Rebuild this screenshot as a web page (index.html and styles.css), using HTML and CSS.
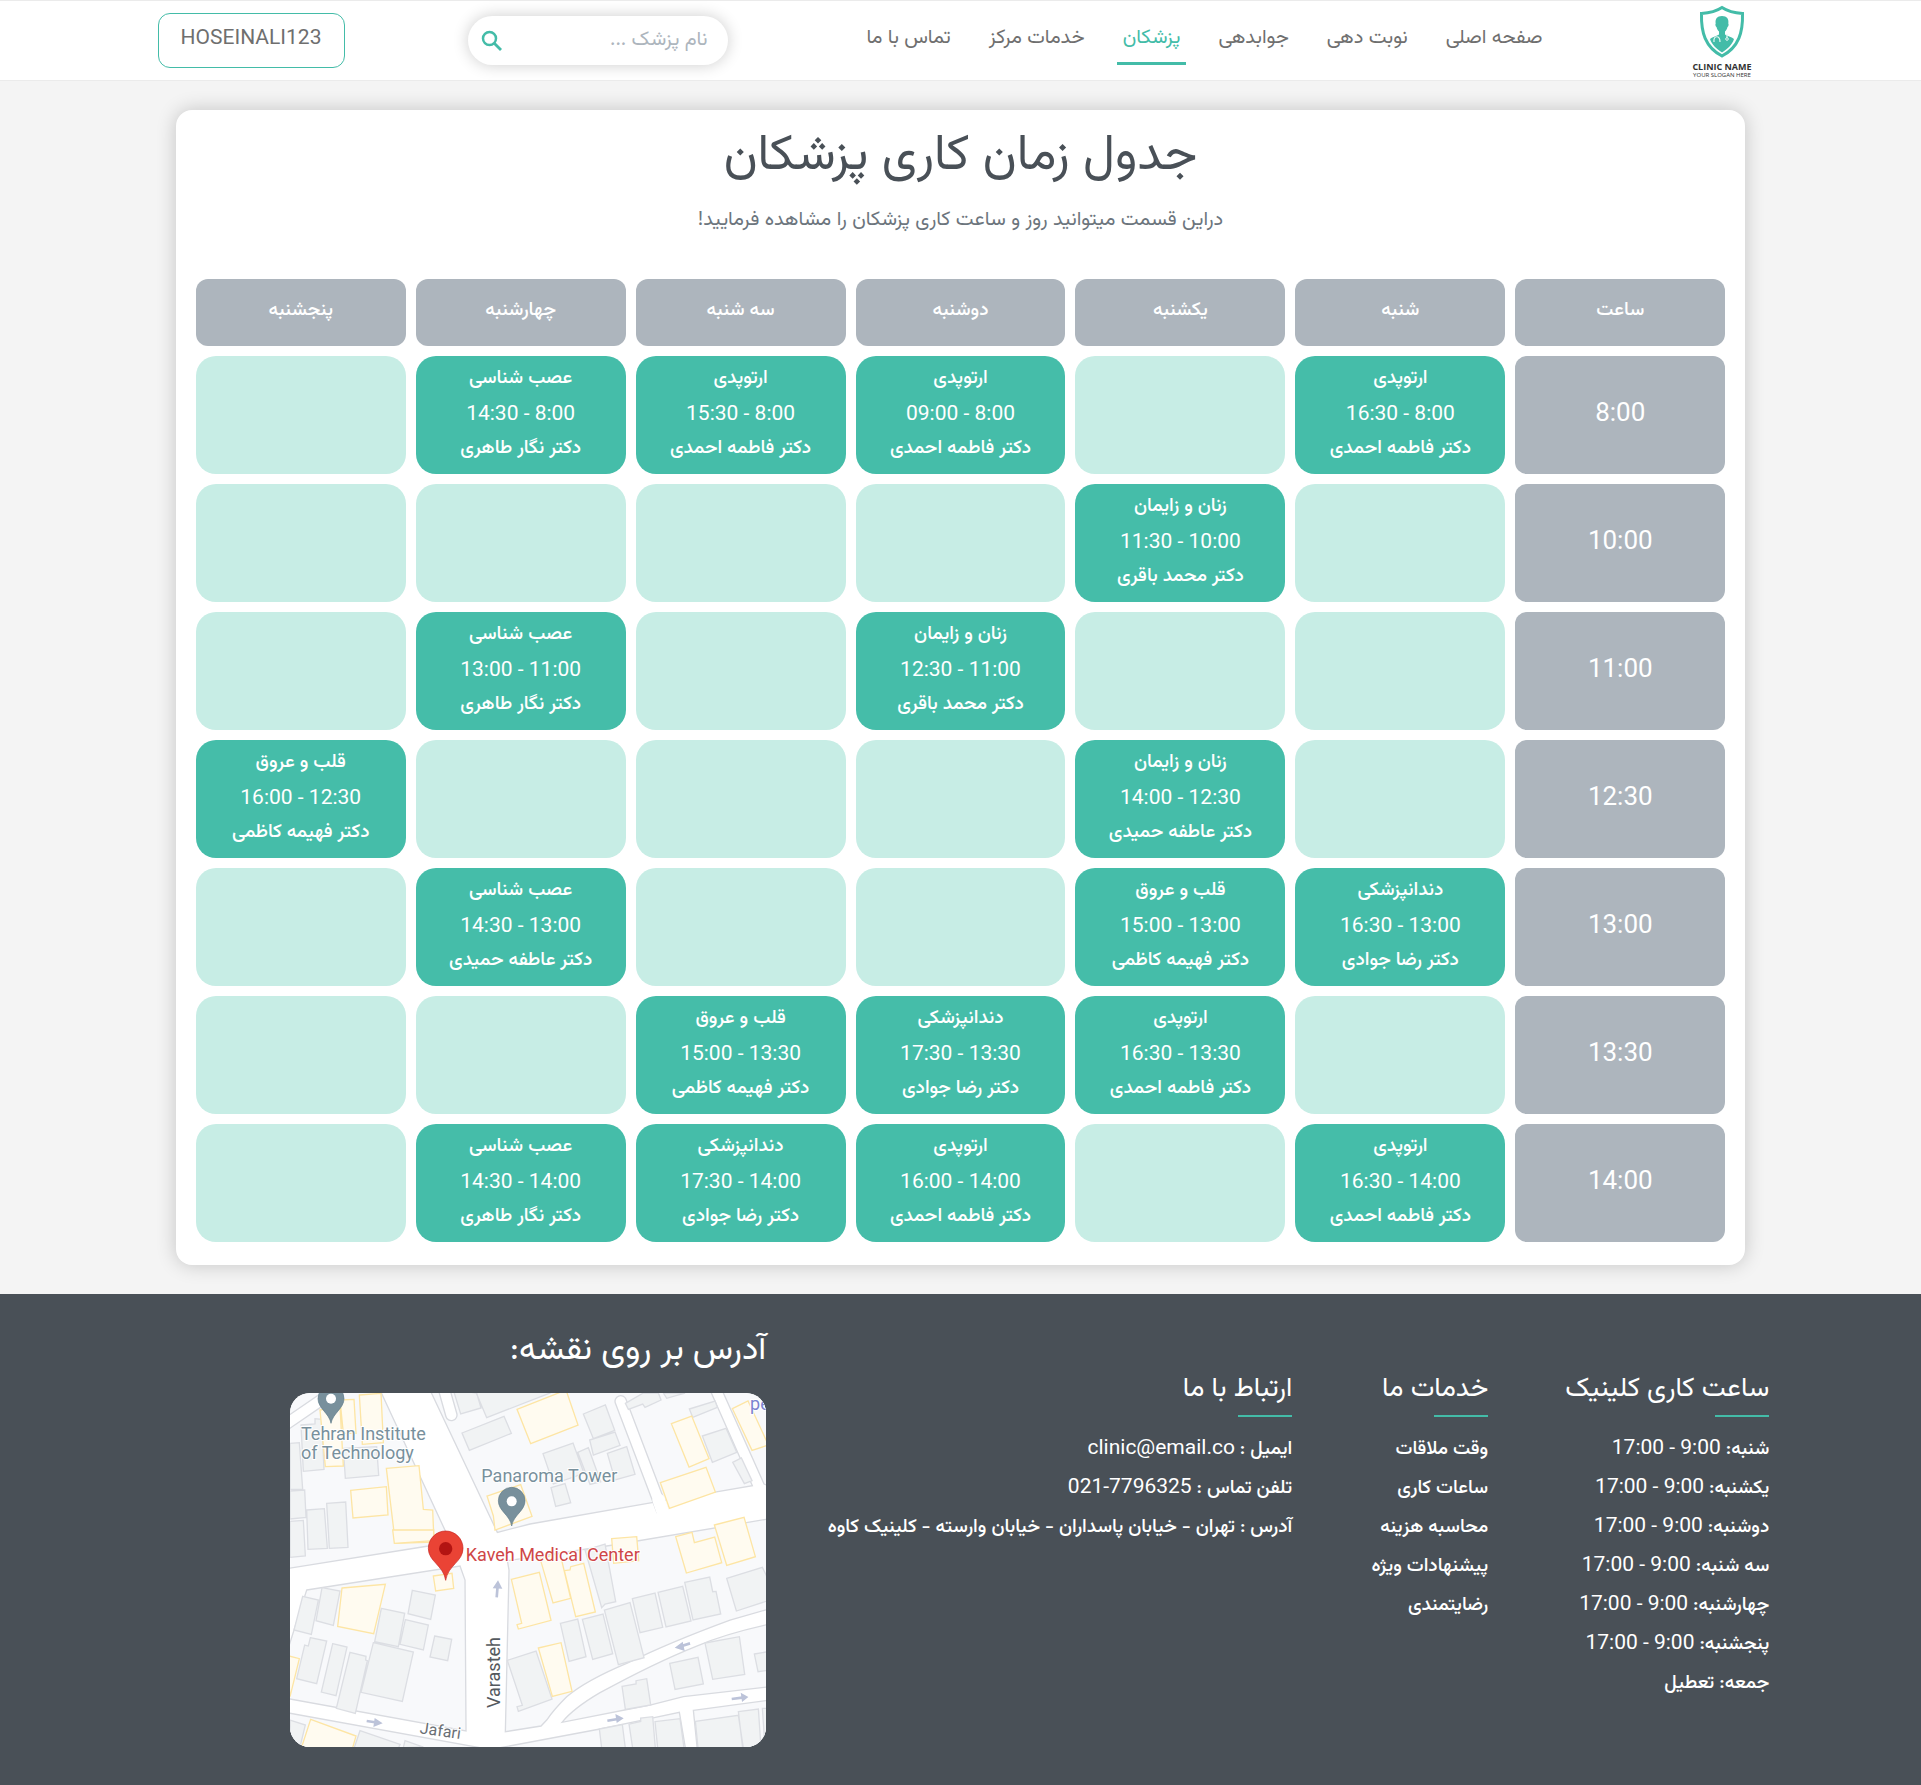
FILE: index.html
```html
<!DOCTYPE html>
<html lang="fa" dir="rtl">
<head>
<meta charset="utf-8">
<meta name="viewport" content="width=device-width, initial-scale=1">
<title>جدول زمان کاری پزشکان</title>
<link rel="stylesheet" href="styles.css">
</head>
<body>
<header class="header">
  <a class="logo" href="#" aria-label="Clinic Name">
    <svg viewBox="0 0 66 78" width="66" height="78">
      <path d="M33 6.500C27 10.500 20 12 12.500 12.500C12 31 16 46 33 55C50 46 54 31 53.500 12.500C46 12 39 10.500 33 6.500Z" fill="#fff" stroke="#43bca8" stroke-width="3"/>
      <path d="M33 15c-5 0-7 3-6.300 7.500c-.8 1 0 3 .8 3.500c.5 2 1.500 3.500 2.500 4.500v3c-3 2-7 2.500-9 4.500c2 6 6 9.500 12 13.500c6-4 10-7.500 12-13.500c-2-2-6-2.500-9-4.500v-3c1-1 2-2.500 2.500-4.500c.8-.5 1.600-2.500 .8-3.500C40 18 38 15 33 15Z" fill="#43bca8"/>
      <path d="M25 41c-1-7 6-7 6 0M38 33v4" fill="none" stroke="#e6f7f3" stroke-width="1.200"/>
      <circle cx="38" cy="38" r="1.300" fill="none" stroke="#e6f7f3"/>
      <text class="logo-name" x="33" y="69">CLINIC NAME</text>
      <text class="logo-slogan" x="33" y="76">YOUR SLOGAN HERE</text>
    </svg>
  </a>
  <nav class="nav">
    <a class="nav-link" href="#">صفحه اصلی</a>
    <a class="nav-link" href="#">نوبت دهی</a>
    <a class="nav-link" href="#">جوابدهی</a>
    <a class="nav-link nav-link-active" href="#" aria-current="page">پزشکان</a>
    <a class="nav-link" href="#">خدمات مرکز</a>
    <a class="nav-link" href="#">تماس با ما</a>
  </nav>
  <form class="search" role="search">
    <input class="search-input" type="text" placeholder="نام پزشک ..." aria-label="نام پزشک">
    <button class="search-button" type="button" aria-label="جستجو">
      <svg viewBox="0 0 24 24" width="24" height="24"><circle cx="9.500" cy="9.500" r="6.500" fill="none" stroke="#43bca8" stroke-width="2.500"/><path d="M14 14l7 7" stroke="#43bca8" stroke-width="2.800"/></svg>
    </button>
  </form>
  <button class="account" type="button">HOSEINALI123</button>
</header>

<main class="card">
  <h1 class="title">جدول زمان کاری پزشکان</h1>
  <p class="subtitle">دراین قسمت میتوانید روز و ساعت کاری پزشکان را مشاهده فرمایید!</p>
  <table class="schedule">
    <thead>
      <tr><th scope="col">ساعت</th><th scope="col">شنبه</th><th scope="col">یکشنبه</th><th scope="col">دوشنبه</th><th scope="col">سه شنبه</th><th scope="col">چهارشنبه</th><th scope="col">پنجشنبه</th></tr>
    </thead>
    <tbody>
      <tr>
        <th scope="row">8:00</th>
        <td class="busy"><p>ارتوپدی</p><p class="time">8:00 - 16:30</p><p>دکتر فاطمه احمدی</p></td>
        <td></td>
        <td class="busy"><p>ارتوپدی</p><p class="time">8:00 - 09:00</p><p>دکتر فاطمه احمدی</p></td>
        <td class="busy"><p>ارتوپدی</p><p class="time">8:00 - 15:30</p><p>دکتر فاطمه احمدی</p></td>
        <td class="busy"><p>عصب شناسی</p><p class="time">8:00 - 14:30</p><p>دکتر نگار طاهری</p></td>
        <td></td>
      </tr>
      <tr>
        <th scope="row">10:00</th>
        <td></td>
        <td class="busy"><p>زنان و زایمان</p><p class="time">10:00 - 11:30</p><p>دکتر محمد باقری</p></td>
        <td></td><td></td><td></td><td></td>
      </tr>
      <tr>
        <th scope="row">11:00</th>
        <td></td><td></td>
        <td class="busy"><p>زنان و زایمان</p><p class="time">11:00 - 12:30</p><p>دکتر محمد باقری</p></td>
        <td></td>
        <td class="busy"><p>عصب شناسی</p><p class="time">11:00 - 13:00</p><p>دکتر نگار طاهری</p></td>
        <td></td>
      </tr>
      <tr>
        <th scope="row">12:30</th>
        <td></td>
        <td class="busy"><p>زنان و زایمان</p><p class="time">12:30 - 14:00</p><p>دکتر عاطفه حمیدی</p></td>
        <td></td><td></td><td></td>
        <td class="busy"><p>قلب و عروق</p><p class="time">12:30 - 16:00</p><p>دکتر فهیمه کاظمی</p></td>
      </tr>
      <tr>
        <th scope="row">13:00</th>
        <td class="busy"><p>دندانپزشکی</p><p class="time">13:00 - 16:30</p><p>دکتر رضا جوادی</p></td>
        <td class="busy"><p>قلب و عروق</p><p class="time">13:00 - 15:00</p><p>دکتر فهیمه کاظمی</p></td>
        <td></td><td></td>
        <td class="busy"><p>عصب شناسی</p><p class="time">13:00 - 14:30</p><p>دکتر عاطفه حمیدی</p></td>
        <td></td>
      </tr>
      <tr>
        <th scope="row">13:30</th>
        <td></td>
        <td class="busy"><p>ارتوپدی</p><p class="time">13:30 - 16:30</p><p>دکتر فاطمه احمدی</p></td>
        <td class="busy"><p>دندانپزشکی</p><p class="time">13:30 - 17:30</p><p>دکتر رضا جوادی</p></td>
        <td class="busy"><p>قلب و عروق</p><p class="time">13:30 - 15:00</p><p>دکتر فهیمه کاظمی</p></td>
        <td></td><td></td>
      </tr>
      <tr>
        <th scope="row">14:00</th>
        <td class="busy"><p>ارتوپدی</p><p class="time">14:00 - 16:30</p><p>دکتر فاطمه احمدی</p></td>
        <td></td>
        <td class="busy"><p>ارتوپدی</p><p class="time">14:00 - 16:00</p><p>دکتر فاطمه احمدی</p></td>
        <td class="busy"><p>دندانپزشکی</p><p class="time">14:00 - 17:30</p><p>دکتر رضا جوادی</p></td>
        <td class="busy"><p>عصب شناسی</p><p class="time">14:00 - 14:30</p><p>دکتر نگار طاهری</p></td>
        <td></td>
      </tr>
    </tbody>
  </table>
</main>

<footer class="footer">
  <section class="footer-column">
    <h2 class="footer-title">ساعت کاری کلینیک</h2>
    <ul class="footer-list">
      <li>شنبه: <span class="latin">9:00 - 17:00</span></li>
      <li>یکشنبه: <span class="latin">9:00 - 17:00</span></li>
      <li>دوشنبه: <span class="latin">9:00 - 17:00</span></li>
      <li>سه شنبه: <span class="latin">9:00 - 17:00</span></li>
      <li>چهارشنبه: <span class="latin">9:00 - 17:00</span></li>
      <li>پنجشنبه: <span class="latin">9:00 - 17:00</span></li>
      <li>جمعه: تعطیل</li>
    </ul>
  </section>
  <section class="footer-column">
    <h2 class="footer-title">خدمات ما</h2>
    <ul class="footer-list">
      <li><a href="#">وقت ملاقات</a></li>
      <li><a href="#">ساعات کاری</a></li>
      <li><a href="#">محاسبه هزینه</a></li>
      <li><a href="#">پیشنهادات ویژه</a></li>
      <li><a href="#">رضایتمندی</a></li>
    </ul>
  </section>
  <section class="footer-column">
    <h2 class="footer-title">ارتباط با ما</h2>
    <ul class="footer-list">
      <li>ایمیل : <bdi class="latin">clinic@email.co</bdi></li>
      <li>تلفن تماس : <bdi class="latin" dir="ltr">021-7796325</bdi></li>
      <li>آدرس : تهران - خیابان پاسداران - خیابان وارسته - کلینیک کاوه</li>
    </ul>
  </section>
  <section class="location">
    <h2 class="location-title">آدرس بر روی نقشه:</h2>
    <svg class="map" viewBox="30 279 1428 1062" role="img" aria-label="Kaveh Medical Center" direction="ltr">
      <rect x="30" y="279" width="1428" height="1062" fill="#fff"/>
      <g fill="#f8f9fb" stroke="#d9dbe0" stroke-width="4">
        <path d="M20 270H300L497 695L445 738L20 806Z"/>
        <path d="M450 270H1290L1417 557L1300 577L1120 607L750 672L652 697Z"/>
        <path d="M1326 270H1470V560L1452 552Z"/>
      </g>
      <g fill="none" stroke-linecap="round">
        <path d="M10 378L160 275M490 260L514 345M1022 304L1146 630" stroke="#d9dbe0" stroke-width="38"/>
        <path d="M10 378L160 275M490 260L514 345M1022 304L1146 630" stroke="#fff" stroke-width="30"/>
        <path d="M1136 600L1150 640" stroke="#fff" stroke-width="38"/>
      </g>
      <g class="building">
        <path d="M520 270L542 342L603 324L590 279ZM585 270L620 353L810 279V270ZM546 399L672 349L694 400L568 451ZM910 342L976 315L1004 391L940 416ZM929 420L1005 396L1020 436L940 465ZM789 461L879 429L912 520L820 552ZM893 457L925 443L962 545L930 553ZM982 460L1040 440L1065 523L1005 540ZM813 563L855 551L872 608L827 619ZM1036 310L1090 279H1135L1143 300L1095 322L1088 312L1045 328ZM1150 279L1160 295L1215 279ZM1228 327L1305 303L1312 322L1238 352ZM1267 408L1338 385L1370 457L1297 487ZM1358 487L1384 474L1416 542L1393 551Z"/>
        <path d="M63 375L105 372V356L125 358L132 508L70 514ZM190 445L290 440L296 526L196 535ZM30 430L58 428L68 568H30ZM30 573L74 570L78 652L30 657ZM80 630L133 626L142 745L84 748ZM140 610L197 606L204 742L148 745ZM30 664L70 661L76 768L30 772Z"/>
      </g>
      <g class="home">
        <path d="M711 328L858 270L894 375L752 431ZM1174 371L1235 348L1287 476L1227 501ZM1357 326L1404 303L1465 435L1416 451ZM1141 548L1278 502L1306 576L1168 625ZM621 588L722 554L756 649L645 690L640 648Z"/>
        <path d="M120 330L180 320L190 498L136 500ZM180 300L222 298L228 400H190ZM238 285L303 280L310 428L247 433ZM319 505L417 497L430 628L458 630L462 726L346 730ZM212 571L319 560L324 645L219 654Z"/>
      </g>
      <g transform="translate(0 690)">
        <g fill="#f8f9fb" stroke="#d9dbe0" stroke-width="4">
          <path d="M80 180L540 108L555 150L558 603L20 505V370Z"/>
          <path d="M20 548L600 653H20Z"/>
          <path d="M682 92L1000 45L1470 -34V236L1350 270Q1170 336 1040 400Q920 450 860 500Q820 540 800 570L783 588L676 605L687 120Z"/>
          <path d="M846 577Q880 535 960 488Q1120 400 1250 348Q1340 310 1470 282V470L1210 500L1110 525Z"/>
          <path d="M660 653L960 597L1080 572L1198 547L1217 660ZM1240 541L1470 510V660H1252Z"/>
        </g>
        <g class="building">
          <path d="M68 199L115 210L94 313L42 300ZM126 173L180 183L160 286L108 272ZM397 181L466 195L452 268L384 251ZM304 235L374 250L355 350L284 335ZM376 269L445 285L430 360L360 343ZM464 318L515 328L503 392L450 381ZM280 338L400 366L367 514L243 487ZM91 323L140 333L110 461L50 446L74 345L85 348ZM158 341L201 351L168 497L124 486ZM210 367L258 379L257 390L262 392L226 550L169 535ZM30 570L76 585L60 651H30ZM240 602L360 643L355 655H222ZM375 632L430 651L370 653Z"/>
          <path d="M915 60L975 42L1007 215L975 222L965 233ZM841 280L893 267L918 380L867 394ZM907 268L969 252L998 371L938 388ZM973 240L1050 218L1092 383L1015 404ZM1057 206L1125 189L1148 292L1080 308ZM1134 187L1208 169L1233 273L1158 291ZM1214 157L1289 141L1298 185L1308 184L1322 252L1239 270ZM1340 145L1447 112L1470 160V210L1369 243ZM682 391L768 363L816 507L715 544L711 530L727 526ZM1026 469L1068 462V452L1100 446L1112 525L1036 538ZM1169 400L1254 382L1270 462L1185 478ZM1275 339L1378 320L1394 433L1298 448ZM1423 372L1470 364V420L1434 425ZM958 597L1027 584L1036 655H965ZM1047 582L1082 574V564L1118 560L1126 655H1058ZM1125 575L1200 566L1212 655H1133ZM1246 574L1375 556L1390 655H1254ZM1375 545L1435 537L1443 655H1388ZM1447 535H1470V655H1455Z"/>
        </g>
        <g class="home">
          <path d="M186 174L316 163L281 311L173 289ZM338 0L343 40L461 32V0ZM460 138L516 130L521 175L467 183ZM92 568L228 618L216 660H62ZM20 376L58 386L30 500Z"/>
          <path d="M694 148L778 127L813 271L715 297L711 284L725 280ZM780 85L840 70L872 205L819 219ZM853 122L870 120L872 110L911 100L946 246L887 260ZM995 26L1070 20L1076 92L1001 100ZM1187 20L1236 7L1243 38L1304 21L1325 98L1219 129ZM1303 -15L1392 -38L1426 80L1340 106ZM775 354L843 338L876 484L817 499Z"/>
        </g>
        <g fill="none" stroke="#bcc3d9" stroke-width="8">
          <path d="M650 202L653 165M260 573L295 578M982 572L1018 566M1355 507L1392 502M1230 340L1198 350"/>
        </g>
        <path fill="#bcc3d9" d="M638 175L654 151L667 176ZM284 564L308 580L280 591ZM1006 552L1031 565L1010 579ZM1382 488L1405 501L1386 516ZM1208 335L1184 353L1214 363Z"/>
      </g>
      <g fill="#78909c" stroke="#607d8b" stroke-width="2">
        <path d="M153 370C148 340 114 325 114 296A39 39 0 0 1 192 296C192 325 158 340 153 370Z"/>
        <path d="M695 678C690 645 655 633 655 602A40 40 0 0 1 735 602C735 633 700 645 695 678Z"/>
      </g>
      <g fill="#fff"><circle cx="153" cy="296" r="15"/><circle cx="695" cy="604" r="15"/></g>
      <path d="M497 841C490 795 445 785 445 745A52 52 0 0 1 549 745C549 785 504 795 497 841Z" fill="#ea4335" stroke="#c5221f" stroke-width="2"/>
      <circle cx="497" cy="746" r="20" fill="#b31412"/>
      <g class="map-text">
        <text class="place" x="63" y="420">Tehran Institute</text>
        <text class="place" x="63" y="478">of Technology</text>
        <text class="place" x="604" y="546">Panaroma Tower</text>
        <text class="clinic" x="557" y="783">Kaveh Medical Center</text>
        <text class="poi" x="1410" y="330">pe</text>
        <text class="street street-major" transform="translate(660 1224) rotate(-90)">Varasteh</text>
        <text class="street" transform="translate(418 1300) rotate(8)">Jafari</text>
      </g>
    </svg>
  </section>
</footer>
</body>
</html>
```
FILE: styles.css
```css
* {
  box-sizing: border-box;
}

body {
  margin: 0;
  background: #f4f4f4;
  color: #495057;
  font-family: Vazirmatn, Roboto, "DejaVu Sans", sans-serif;
  font-size: 19px;
}

h1,
h2,
p,
ul {
  margin: 0;
  padding: 0;
  font-weight: 400;
}

a {
  color: inherit;
  text-decoration: none;
}

button,
input {
  font: inherit;
}

.header {
  display: grid;
  grid-template-columns: 215fr 821fr 383fr 187fr;
  align-items: start;
  height: 81px;
  padding: 0 8.2%;
  border-top: 1px solid #ebebeb;
  border-bottom: 1px solid #ebebeb;
  background: #fff;
}

.logo {
  padding-inline-start: 8px;
}

.logo svg {
  display: block;
}

.logo text {
  direction: ltr;
  text-anchor: middle;
  fill: #333;
}

.logo .logo-name {
  font: 700 9px "Open Sans", sans-serif;
}

.logo .logo-slogan {
  font: 400 6px "Open Sans", sans-serif;
}

.nav {
  display: flex;
  gap: 26px;
  padding-top: 12px;
  font-size: 20px;
}

.nav-link {
  height: 52px;
  padding: 0 6px;
  border-bottom: 3px solid transparent;
  color: #6f6f6f;
  line-height: 50px;
  white-space: nowrap;
}

.nav-link-active {
  border-bottom-color: #43bca8;
  color: #43bca8;
}

.search {
  display: flex;
  align-items: center;
  width: 260px;
  height: 49px;
  margin-top: 15px;
  padding: 0 20px 0 12px;
  border-radius: 25px;
  background: #fff;
  box-shadow: 0 0 16px rgba(0, 0, 0, 0.2);
}

.search-input {
  flex: 1;
  min-width: 0;
  padding: 0 0 2px;
  border: 0;
  outline: 0;
  background: none;
  font-size: 20px;
}

.search-input::placeholder {
  color: #adb5bd;
}

.search-button {
  height: 24px;
  padding: 0;
  border: 0;
  background: none;
}

.account {
  height: 55px;
  margin-top: 12px;
  padding: 0 16px 8px;
  border: 1px solid #43bca8;
  border-radius: 12px;
  background: #fff;
  color: #6f6f6f;
  font-family: Roboto, sans-serif;
  font-size: 21px;
}

.card {
  margin: 29px 9.15%;
  padding: 15px 10px 13px;
  border-radius: 16px;
  background: #fff;
  box-shadow: 0 0 20px rgba(0, 0, 0, 0.2);
  text-align: center;
}

.title {
  font-size: 50px;
  line-height: 64px;
}

.subtitle {
  margin-top: 13px;
  color: #6c757d;
  font-size: 20px;
  line-height: 36px;
}

.schedule {
  width: 100%;
  margin-top: 31px;
  border-spacing: 10px;
  table-layout: fixed;
  color: #fff;
  font-weight: 500;
  line-height: 35px;
}

.schedule p {
  font-weight: 500;
}

.schedule th {
  padding: 0 0 4px;
  border-radius: 12px;
  background: #adb5bd;
  font-weight: 500;
}

.schedule thead th {
  height: 67px;
}

.schedule tbody th {
  padding-bottom: 6px;
  font-family: Roboto, sans-serif;
  font-size: 26px;
  font-weight: 400;
}

.schedule td {
  height: 118px;
  padding: 2px 0 6px;
  border-radius: 20px;
  background: #c7ede5;
}

.schedule .busy {
  background: #45bda9;
}

.schedule .time,
.latin {
  font-family: Roboto, sans-serif;
  font-size: 21px;
  font-weight: 400;
}

.latin {
  line-height: 1;
}

.footer {
  display: grid;
  grid-template-columns: 281fr 196fr 526fr 476fr;
  padding: 32px 7.9% 38px 15.1%;
  background: #495057;
  color: #fff;
}

.footer-column {
  padding-top: 40px;
}

.footer-title {
  font-size: 27px;
  line-height: 48px;
  white-space: nowrap;
}

.footer-title::after {
  display: block;
  width: 54px;
  height: 2px;
  margin-top: 1px;
  background: #43bca8;
  content: "";
}

.footer-list {
  margin-top: 13px;
  font-weight: 500;
  line-height: 39px;
  list-style: none;
  white-space: nowrap;
}

.location-title {
  font-size: 34px;
  line-height: 50px;
}

.map {
  display: block;
  width: 100%;
  margin-top: 17px;
  border-radius: 20px;
}

.building {
  fill: #f1f3f4;
  stroke: #dcdee3;
  stroke-width: 4px;
}

.home {
  fill: #fffbf0;
  stroke: #fde5a4;
  stroke-width: 4px;
}

.map-text {
  direction: ltr;
  font-family: Roboto, sans-serif;
  font-size: 54px;
  paint-order: stroke;
  stroke: #fff;
  stroke-width: 6px;
}

.place {
  fill: #78909c;
}

.clinic {
  fill: #cf4647;
}

.poi {
  fill: #7b83d0;
}

.street {
  fill: #6b7075;
  font-size: 48px;
}

.street-major {
  fill: #54595e;
  font-size: 54px;
}
```
